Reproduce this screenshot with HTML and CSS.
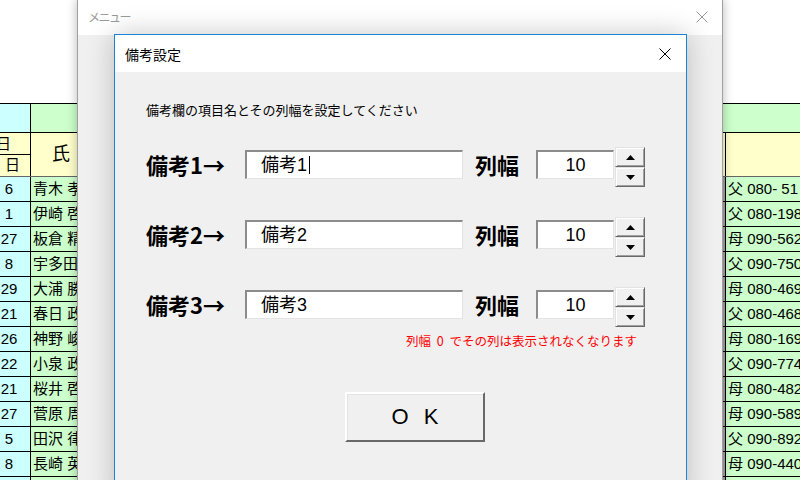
FILE: index.html
```html
<!DOCTYPE html>
<html lang="ja">
<head>
<meta charset="utf-8">
<title>備考設定</title>
<link rel="stylesheet" href="styles.css">
</head>
<body>
<div class="sheet">
  <div class="sheet-blank"></div>
  <div class="srow hrow1">
    <div class="ca cyan"></div>
    <div class="cb green"></div>
  </div>
  <div class="srow hrow2">
    <div class="ca yellow split">
      <div class="sub sub-top"><span class="clip">日</span></div>
      <div class="sub sub-bottom">日</div>
    </div>
    <div class="cb yellow hname">氏</div>
    <div class="cd yellow"></div>
  </div>
  <div class="srow drow"><div class="ca cyan num">6</div><div class="cb green name">青木 孝</div><div class="cc"></div><div class="cd green tel">父 080- 51</div></div>
  <div class="srow drow"><div class="ca cyan num">1</div><div class="cb green name">伊崎 啓</div><div class="cc"></div><div class="cd green tel">父 080-198</div></div>
  <div class="srow drow"><div class="ca cyan num">27</div><div class="cb green name">板倉 精</div><div class="cc"></div><div class="cd green tel">母 090-562</div></div>
  <div class="srow drow"><div class="ca cyan num">8</div><div class="cb green name">宇多田</div><div class="cc"></div><div class="cd green tel">父 090-750</div></div>
  <div class="srow drow"><div class="ca cyan num">29</div><div class="cb green name">大浦 勝</div><div class="cc"></div><div class="cd green tel">母 080-469</div></div>
  <div class="srow drow"><div class="ca cyan num">21</div><div class="cb green name">春日 政</div><div class="cc"></div><div class="cd green tel">父 080-468</div></div>
  <div class="srow drow"><div class="ca cyan num">26</div><div class="cb green name">神野 峻</div><div class="cc"></div><div class="cd green tel">母 080-169</div></div>
  <div class="srow drow"><div class="ca cyan num">22</div><div class="cb green name">小泉 政</div><div class="cc"></div><div class="cd green tel">父 090-774</div></div>
  <div class="srow drow"><div class="ca cyan num">21</div><div class="cb green name">桜井 啓</div><div class="cc"></div><div class="cd green tel">母 080-482</div></div>
  <div class="srow drow"><div class="ca cyan num">27</div><div class="cb green name">菅原 周</div><div class="cc"></div><div class="cd green tel">母 090-589</div></div>
  <div class="srow drow"><div class="ca cyan num">5</div><div class="cb green name">田沢 律</div><div class="cc"></div><div class="cd green tel">父 090-892</div></div>
  <div class="srow drow"><div class="ca cyan num">8</div><div class="cb green name">長崎 英</div><div class="cc"></div><div class="cd green tel">母 090-440</div></div>
  <div class="srow drow"><div class="ca cyan num"></div><div class="cb green name"></div><div class="cc"></div><div class="cd green tel"></div></div>
</div>

<div class="win-outer">
  <div class="outer-title">
    <span class="outer-name">メニュー</span>
    <svg class="outer-close" width="12" height="12" viewBox="0 0 12 12"><path d="M0.5 0.5 L11.5 11.5 M11.5 0.5 L0.5 11.5" stroke="#9a9a9a" stroke-width="1" fill="none"/></svg>
  </div>
</div>

<div class="dialog">
  <div class="dlg-title">
    <span>備考設定</span>
    <svg class="dlg-close" width="12" height="12" viewBox="0 0 12 12"><path d="M0.5 0.5 L11.5 11.5 M11.5 0.5 L0.5 11.5" stroke="#000" stroke-width="1" fill="none"/></svg>
  </div>
  <div class="dlg-body">
    <p class="instr">備考欄の項目名とその列幅を設定してください</p>

    <div class="frow">
      <div class="flabel">備考1→</div>
      <div class="tbox name-box">備考1<span class="caret"></span></div>
      <div class="wlabel">列幅</div>
      <div class="tbox num-box">10</div>
      <div class="spin">
        <div class="spin-btn"><svg width="9" height="5" viewBox="0 0 9 5"><polygon points="0,5 9,5 4.5,0" fill="#000"/></svg></div>
        <div class="spin-btn"><svg width="9" height="5" viewBox="0 0 9 5"><polygon points="0,0 9,0 4.5,5" fill="#000"/></svg></div>
      </div>
    </div>

    <div class="frow">
      <div class="flabel">備考2→</div>
      <div class="tbox name-box">備考2</div>
      <div class="wlabel">列幅</div>
      <div class="tbox num-box">10</div>
      <div class="spin">
        <div class="spin-btn"><svg width="9" height="5" viewBox="0 0 9 5"><polygon points="0,5 9,5 4.5,0" fill="#000"/></svg></div>
        <div class="spin-btn"><svg width="9" height="5" viewBox="0 0 9 5"><polygon points="0,0 9,0 4.5,5" fill="#000"/></svg></div>
      </div>
    </div>

    <div class="frow">
      <div class="flabel">備考3→</div>
      <div class="tbox name-box">備考3</div>
      <div class="wlabel">列幅</div>
      <div class="tbox num-box">10</div>
      <div class="spin">
        <div class="spin-btn"><svg width="9" height="5" viewBox="0 0 9 5"><polygon points="0,5 9,5 4.5,0" fill="#000"/></svg></div>
        <div class="spin-btn"><svg width="9" height="5" viewBox="0 0 9 5"><polygon points="0,0 9,0 4.5,5" fill="#000"/></svg></div>
      </div>
    </div>

    <p class="note">列幅 0 でその列は表示されなくなります</p>

    <div class="ok-btn">O K</div>
  </div>
</div>
</body>
</html>
```

FILE: styles.css
```css
* { box-sizing: border-box; }
html, body { margin: 0; padding: 0; }
body {
  width: 800px;
  height: 480px;
  overflow: hidden;
  position: relative;
  background: #fff;
  color: #000;
  font-family: "Liberation Sans", "Noto Sans CJK JP", sans-serif;
}

/* spreadsheet background */
.sheet { width: 800px; }
.sheet-blank { height: 104px; border-bottom: 1px solid #000; }
.srow { display: flex; border-bottom: 1px solid #000; }
.hrow1 { height: 29px; }
.hrow2 { height: 44px; border-bottom-color: #666; }
.drow { height: 25px; }

.ca { width: 31px; flex: none; border-right: 1px solid #000; overflow: hidden; }
.cb { flex: 1; overflow: hidden; white-space: nowrap; }
.cc { width: 4px; flex: none; background: #a3a3a3; border-right: 1px solid #000; }
.cd { width: 74px; flex: none; overflow: hidden; white-space: nowrap; }

.cyan { background: #ccffff; }
.green { background: #ccffcc; }
.yellow { background: #ffffcc; }

.split { display: flex; flex-direction: column; }
.sub { font-size: 15px; white-space: nowrap; }
.sub-top { height: 22px; line-height: 22px; border-bottom: 1px solid #000; }
.sub-top .clip { margin-left: -4px; }
.sub-bottom { flex: 1; line-height: 20px; text-align: center; padding-right: 5px; }

.hrow2 .cb { border-right: 1px solid #000; }
.hname { font-size: 18px; line-height: 43px; padding-left: 21px; }

.num { font-size: 15px; line-height: 24px; text-align: center; padding-right: 12px; }
.name { font-size: 15px; line-height: 24px; padding-left: 2px; }
.tel { font-size: 15px; line-height: 24px; padding-left: 2px; }

/* outer (inactive) window */
.win-outer {
  position: absolute;
  left: 77px;
  top: -1px;
  width: 646px;
  height: 492px;
  border: 1px solid #a0a0a0;
  background: #f0f0f0;
  box-shadow: 0 0 10px rgba(0, 0, 0, 0.28);
}
.outer-title {
  height: 35px;
  background: #fff;
  display: flex;
  align-items: center;
  justify-content: space-between;
  padding: 0 14px 2px 10px;
  color: #9a9a9a;
  font-size: 12px;
}
.outer-name { letter-spacing: -1.5px; }

/* active dialog */
.dialog {
  position: absolute;
  left: 114px;
  top: 34px;
  width: 573px;
  height: 470px;
  border: 1px solid #1883d7;
  background: #f0f0f0;
  box-shadow: 0 0 26px rgba(0, 0, 0, 0.22);
}
.dlg-title {
  height: 37px;
  background: #fff;
  display: flex;
  align-items: center;
  justify-content: space-between;
  padding: 0 15px 0 10px;
  font-size: 14px;
}
.dlg-body { padding: 30px 0 0 31px; }
.instr { margin: 0 0 27px 0; font-size: 13px; line-height: 18px; }

.frow { display: flex; height: 40px; }
.frow + .frow { margin-top: 30px; }
.flabel {
  width: 99px;
  margin-top: 3px;
  font-family: "Noto Sans CJK JP", sans-serif;
  font-size: 22px;
  font-weight: bold;
  line-height: 29px;
  white-space: nowrap;
}
.wlabel {
  width: 61px;
  margin-left: 12px;
  margin-top: 3px;
  font-family: "Noto Sans CJK JP", sans-serif;
  font-size: 22px;
  font-weight: bold;
  line-height: 29px;
}
.tbox {
  margin-top: 3px;
  height: 29px;
  background: #fff;
  border-style: solid;
  border-width: 2px 1px 1px 2px;
  border-color: #8c8c8c #e3e3e3 #e3e3e3 #8c8c8c;
  font-size: 18px;
  line-height: 26px;
  white-space: nowrap;
}
.name-box { width: 218px; padding-left: 14px; }
.num-box { width: 78px; text-align: center; }
.caret {
  display: inline-block;
  width: 1px;
  height: 18px;
  background: #000;
  margin-left: 2px;
  vertical-align: -3px;
}

.spin { width: 30px; margin-left: 1px; display: flex; flex-direction: column; }
.spin-btn {
  height: 20px;
  display: flex;
  align-items: center;
  justify-content: center;
  background: #f0f0f0;
  border: 1px solid;
  border-color: #e3e3e3 #696969 #696969 #e3e3e3;
  box-shadow: inset 1px 1px 0 #fff, inset -1px -1px 0 #a0a0a0;
}

.note {
  margin: 6px 0 0 260px;
  color: #ff0000;
  font-family: "Noto Sans CJK JP", sans-serif;
  font-size: 12.5px;
  line-height: 16px;
  word-spacing: 3px;
  white-space: nowrap;
}

.ok-btn {
  margin: 43px 0 0 199px;
  width: 140px;
  height: 50px;
  background: #f0f0f0;
  border: 2px solid;
  border-color: #fff #696969 #696969 #fff;
  box-shadow: inset 1px 1px 0 #e3e3e3;
  display: flex;
  align-items: center;
  justify-content: center;
  font-size: 22px;
  word-spacing: 9px;
}
```
